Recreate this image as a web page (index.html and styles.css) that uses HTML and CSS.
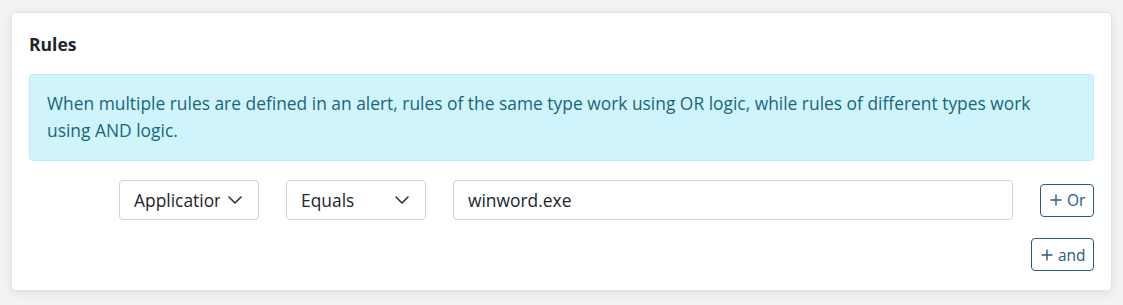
FILE: index.html
```html
<!DOCTYPE html>
<html>
<head>
<meta charset="utf-8">
<link rel="stylesheet" href="styles.css">
</head>
<body>
<div class="card">
  <h2 class="title">Rules</h2>
  <div class="alert">When multiple rules are defined in an alert, rules of the same type work using OR logic, while rules of different types work using AND logic.</div>
  <div class="row">
    <div class="select s1"><span class="val">Application</span><svg class="chev" width="14" height="8" viewBox="0 0 14 8"><path d="M1 1l6 6 6-6" fill="none" stroke="#333" stroke-width="1.6" stroke-linecap="round" stroke-linejoin="round"/></svg></div>
    <div class="select s2"><span class="val">Equals</span><svg class="chev" width="14" height="8" viewBox="0 0 14 8"><path d="M1 1l6 6 6-6" fill="none" stroke="#333" stroke-width="1.6" stroke-linecap="round" stroke-linejoin="round"/></svg></div>
    <div class="input">winword.exe</div>
    <button class="btn btn-or"><svg class="plus" width="12" height="12" viewBox="0 0 12 12"><path d="M6 0.5v11M0.5 6h11" stroke="#2b5a7e" stroke-width="1.4"/></svg>Or</button>
  </div>
  <div class="row2">
    <button class="btn btn-and"><svg class="plus" width="12" height="12" viewBox="0 0 12 12"><path d="M6 0.5v11M0.5 6h11" stroke="#2b5a7e" stroke-width="1.4"/></svg>and</button>
  </div>
</div>
</body>
</html>
```
FILE: styles.css
```css
html, body {
  margin: 0;
  padding: 0;
}
body {
  background: #f3f3f3;
  font-family: "Open Sans", "Liberation Sans", sans-serif;
  color: #212529;
  padding: 12px 11px 0 11px;
  height: 305px;
  box-sizing: border-box;
}
.card {
  width: 1101px;
  height: 279px;
  box-sizing: border-box;
  background: #fff;
  border: 1px solid #e3e3e3;
  border-radius: 4px;
  box-shadow: 0 2px 10px rgba(0,0,0,0.08);
  padding: 20px 17px 0 17px;
}
.title {
  margin: 0;
  font-size: 17.5px;
  font-weight: 700;
  line-height: 22px;
  color: #212529;
}
.alert {
  margin-top: 19px;
  background: #cff4fc;
  border: 1px solid #b6effb;
  border-radius: 4px;
  color: #19677a;
  font-size: 17.4px;
  line-height: 27px;
  padding: 15px 17px 16px 17px;
}
.row {
  display: flex;
  align-items: center;
  justify-content: flex-end;
  gap: 27px;
  margin-top: 19px;
  height: 40px;
}
.select {
  width: 140px;
  height: 40px;
  box-sizing: border-box;
  border: 1px solid #ced4da;
  border-radius: 4px;
  display: flex;
  align-items: center;
  padding-left: 14px;
  padding-right: 16px;
  font-size: 17.4px;
}
.val {
  flex: 1;
  overflow: hidden;
  white-space: nowrap;
}
.chev { flex: none; margin-left: 8px; }
.input {
  width: 560px;
  height: 40px;
  box-sizing: border-box;
  border: 1px solid #ced4da;
  border-radius: 4px;
  padding-left: 14px;
  display: flex;
  align-items: center;
  font-size: 17.4px;
}
.btn {
  font-family: "Open Sans", "Liberation Sans", sans-serif;
  font-size: 15.5px;
  color: #2b5a7e;
  background: #fff;
  border: 1px solid #2b5a7e;
  border-radius: 4px;
  height: 33px;
  box-sizing: border-box;
  padding: 0 7px 0 9px;
  display: flex;
  align-items: center;
  cursor: pointer;
}
.btn-or { width: 54px; }
.btn-and { width: 63px; }
.plus {
  flex: none;
  margin-right: 5px;
}
.row2 {
  display: flex;
  justify-content: flex-end;
  margin-top: 18px;
}
```
